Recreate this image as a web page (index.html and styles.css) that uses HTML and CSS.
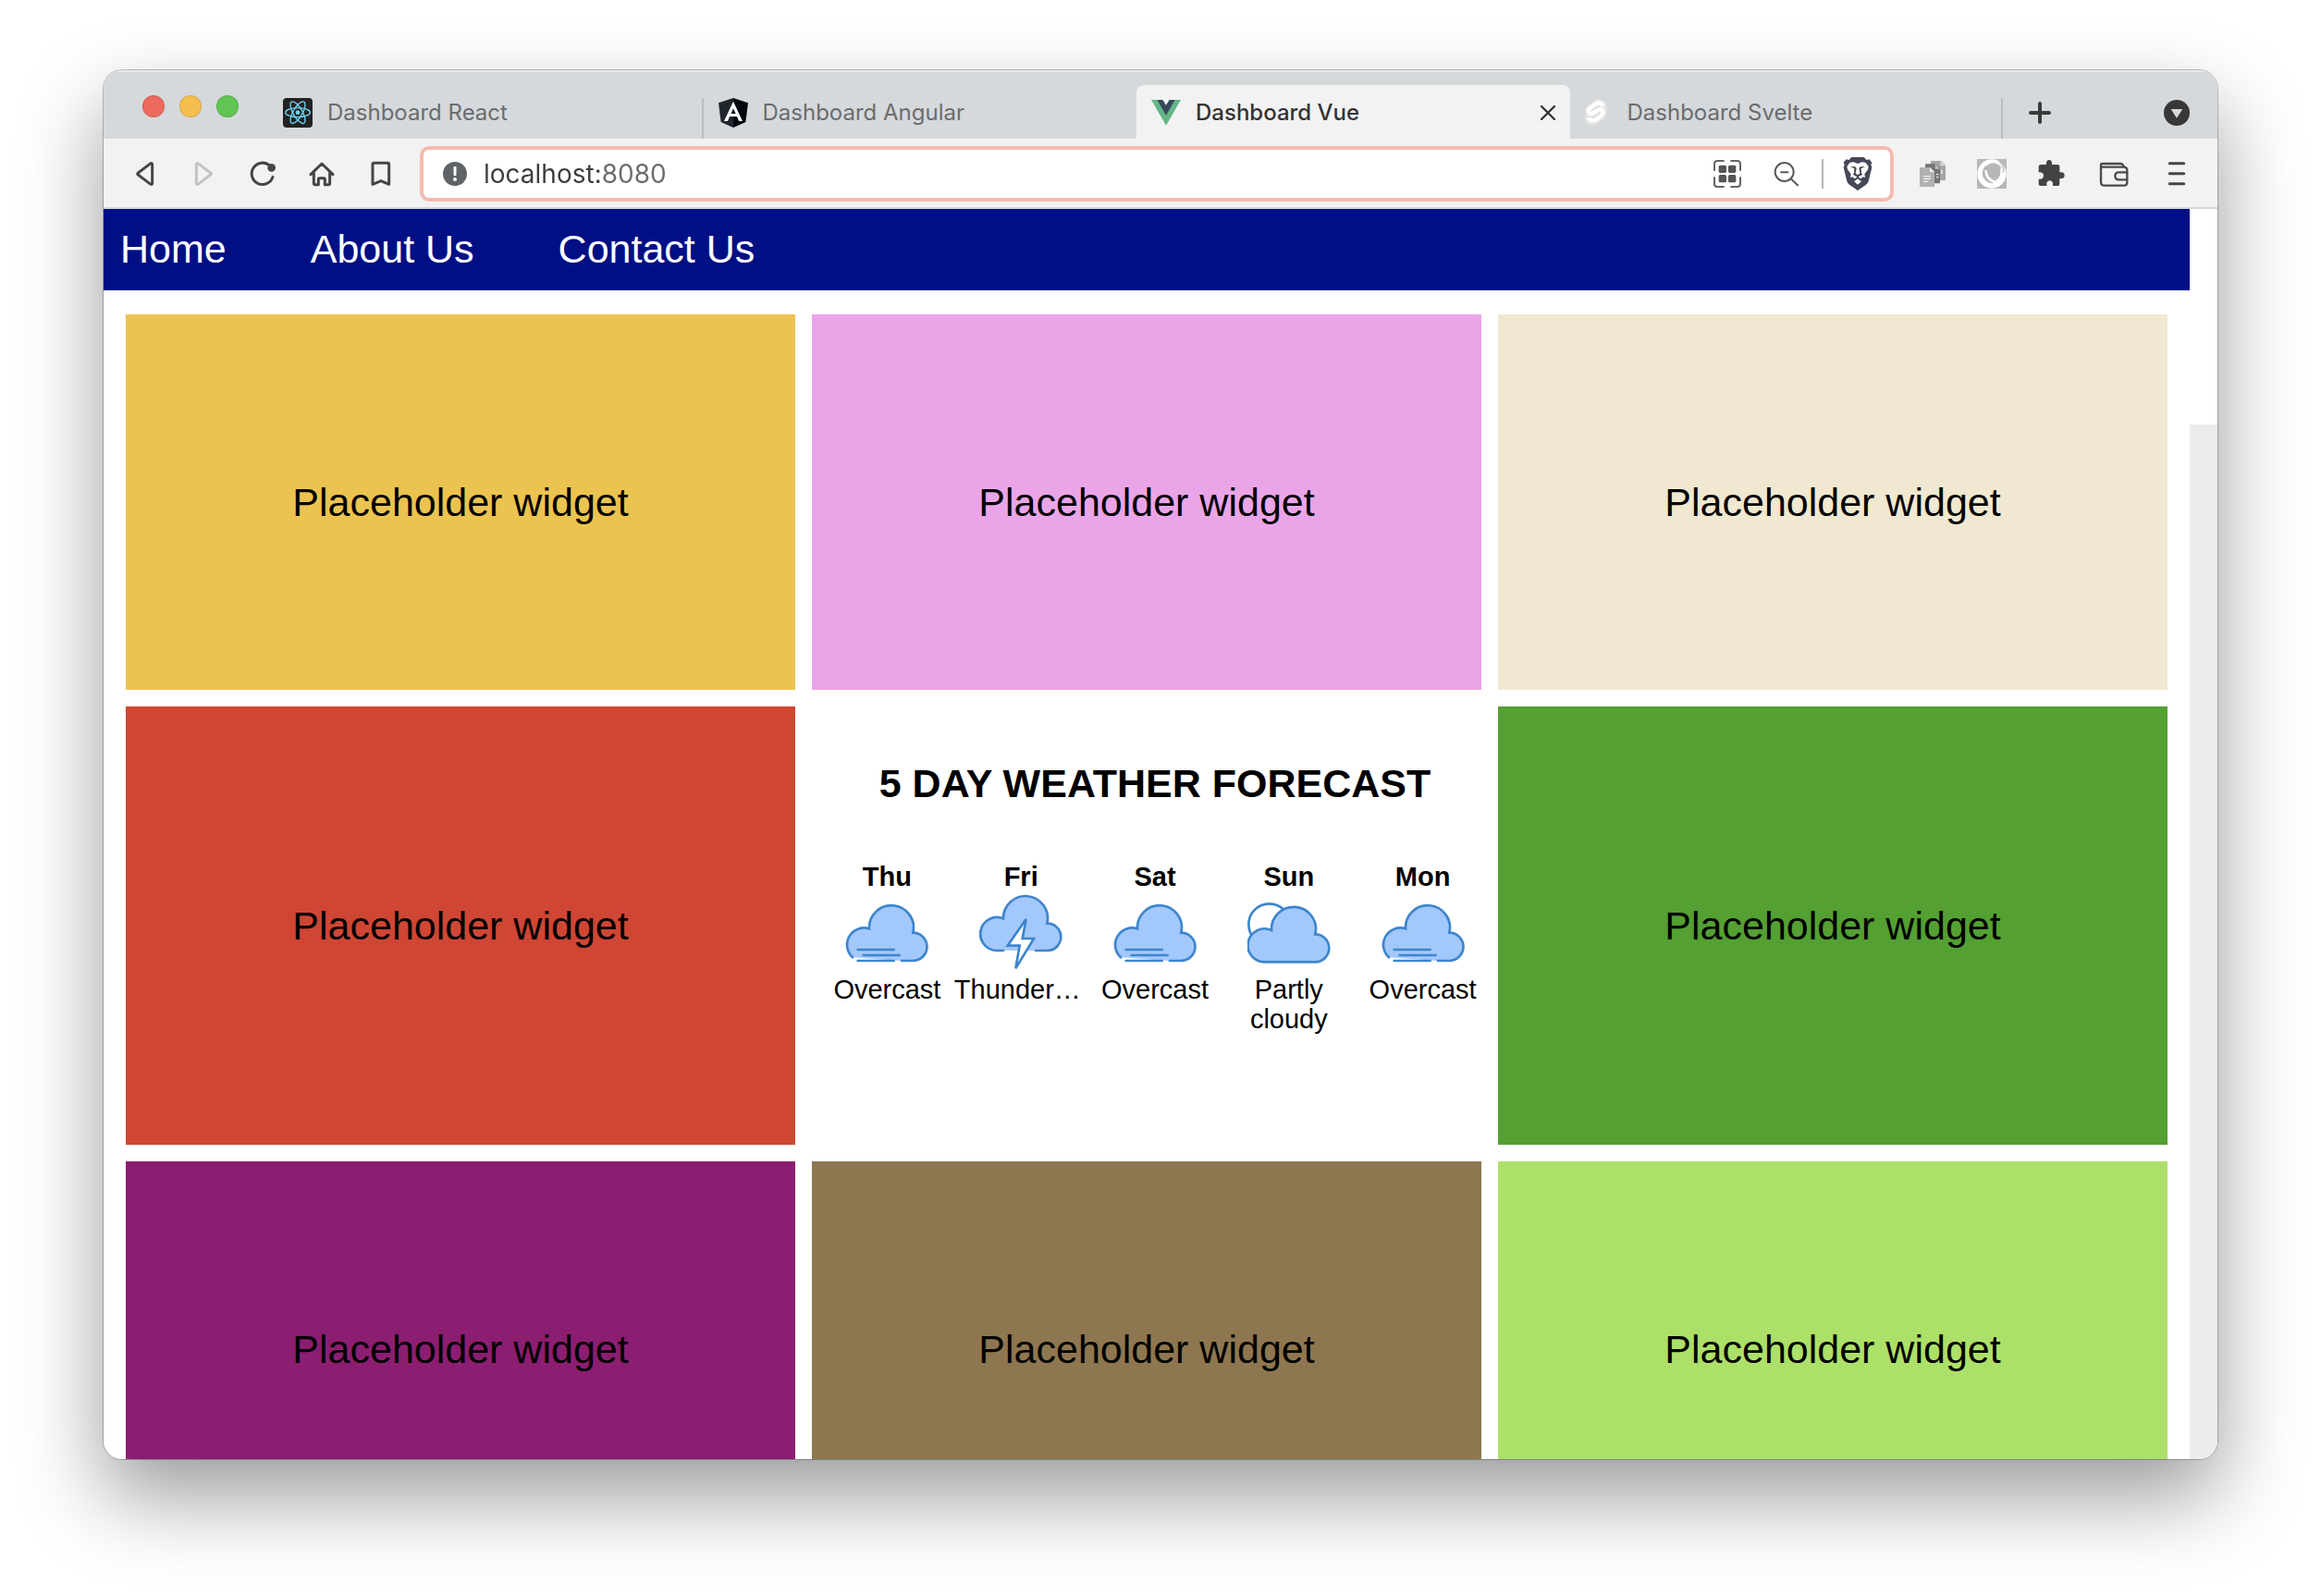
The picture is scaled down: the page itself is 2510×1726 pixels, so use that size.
FILE: index.html
```html
<!DOCTYPE html>
<html lang="en">
<head>
<meta charset="utf-8">
<title>Dashboard Vue</title>
<link rel="stylesheet" href="styles.css">
</head>
<body>
<svg class="sprite" aria-hidden="true">
  <symbol id="overcast" viewBox="0 0 270 270">
    <path class="cloud" d="M24 214A55 55 0 0 1 78 121A72 72 0 1 1 220 134A45 45 0 0 1 220 225H183"/>
    <path class="line" d="M41 189H158M59 207H176M41 225H158"/>
  </symbol>
  <symbol id="thunder" viewBox="0 0 270 270">
    <path class="cloud" d="M78 192H58A54 54 0 1 1 78 88A72 72 0 1 1 220 104A44 44 0 0 1 222 192H183"/>
    <path class="bolt" d="M152 90L92 176H131L118 250L177 153H140Z"/>
  </symbol>
  <symbol id="partly" viewBox="0 0 270 270">
    <circle class="moon" cx="71" cy="107" r="67"/>
    <path class="cloud" d="M58 229A54 54 0 1 1 78 126A72 72 0 1 1 220 139A45 45 0 0 1 220 229Z"/>
  </symbol>
</svg>
<main class="window">
  <header class="tabbar">
    <div class="lights"><span class="light red"></span><span class="light yellow"></span><span class="light green"></span></div>
    <div class="tabs">
      <a class="tab" href="#react">
        <svg class="favicon" viewBox="0 0 96 96"><rect width="96" height="96" rx="12" fill="#222"/><g fill="none" stroke="#70d5f5" stroke-width="4"><ellipse cx="48" cy="47" rx="40" ry="15"/><ellipse cx="48" cy="47" rx="40" ry="15" transform="rotate(60 48 47)"/><ellipse cx="48" cy="47" rx="40" ry="15" transform="rotate(120 48 47)"/></g><circle cx="48" cy="47" r="7" fill="#70d5f5"/></svg>
        <span>Dashboard React</span>
      </a>
      <a class="tab divided" href="#angular">
        <svg class="favicon" viewBox="0 0 96 96"><path d="M48 0L0 16L8 78L48 96Z" fill="#20262e"/><path d="M48 0L96 16L88 78L48 96Z" fill="#02060d"/><path d="M48 11L18 75H30L36 60H60L66 75H78ZM48 34L56 51H40Z" fill="#fff" fill-rule="evenodd"/></svg>
        <span>Dashboard Angular</span>
      </a>
      <a class="tab active" href="#vue" aria-current="page">
        <svg class="favicon" viewBox="0 0 96 96"><path d="M0 6H37L48 24L59 6H96L48 89Z" fill="#64b687"/><path d="M19 6H37L48 24L59 6H77L48 56Z" fill="#35495e"/></svg>
        <span>Dashboard Vue</span>
        <button class="close" aria-label="Close tab"><svg viewBox="0 0 48 48"><path d="M3 3L45 45M45 3L3 45"/></svg></button>
      </a>
      <a class="tab last" href="#svelte">
        <svg class="favicon" viewBox="0 0 96 96"><path d="M40 8L20 22Q5 34 9 50Q3 66 12 80Q25 93 42 84L65 68Q78 56 74 42Q79 25 70 13Q57 1 40 8Z" fill="#e3e3e3" stroke="#f4f1ee" stroke-width="2" stroke-dasharray="6 4"/><path d="M66 27Q58 10 42 19L24 31Q14 39 20 48Q26 54 36 47L50 38Q60 33 64 43Q66 52 57 59L40 71Q24 79 16 64" fill="none" stroke="#fff" stroke-width="13"/></svg>
        <span>Dashboard Svelte</span>
      </a>
    </div>
    <button class="newtab" aria-label="New tab"><svg viewBox="0 0 72 72"><path d="M36 6V66M6 36H66"/></svg></button>
    <button class="tabmenu" aria-label="Search tabs"><svg viewBox="0 0 84 84"><circle cx="42" cy="42" r="42"/><path d="M23 30H61L42 59Z"/></svg></button>
  </header>

  <div class="toolbar">
    <button class="tool" aria-label="Back"><svg class="stroked" viewBox="0 0 96 96"><path d="M28 45L66 16Q74 10 74 19V77Q74 86 66 80L28 51Q24 48 28 45Z"/></svg></button>
    <button class="tool disabled" aria-label="Forward" disabled><svg class="stroked" viewBox="0 0 96 96"><path d="M71 45L33 16Q25 10 25 19V77Q25 86 33 80L71 51Q75 48 71 45Z"/></svg></button>
    <button class="tool" aria-label="Reload"><svg class="stroked" viewBox="0 0 96 96"><path d="M81 58A35 35 0 1 1 68 19"/><circle class="solid" cx="77" cy="28" r="13"/></svg></button>
    <button class="tool" aria-label="Home"><svg class="stroked" viewBox="0 0 96 96"><path d="M12 50L48 15L84 50M22 44V79Q22 83 26 83H37V65Q37 62 40 62H55Q58 62 58 65V83H70Q74 83 74 79V44"/></svg></button>
    <button class="tool" aria-label="Bookmark"><svg class="stroked" viewBox="0 0 96 96"><path d="M21 17Q21 13 25 13H70Q74 13 74 17V82L48 71L21 82Z"/></svg></button>

    <div class="address">
      <svg class="info" viewBox="0 0 78 78"><circle cx="39" cy="39" r="39" fill="#5f6368"/><path d="M39 19V41" stroke="#fff" stroke-width="9" stroke-linecap="round"/><circle cx="39" cy="57" r="6" fill="#fff"/></svg>
      <input class="url" type="text" aria-label="Address" value="localhost:8080">
      <button class="tool" aria-label="QR code"><svg viewBox="0 0 96 96"><path d="M38 6H16Q6 6 6 16V38M58 6H80Q90 6 90 16V38M6 58V80Q6 90 16 90H38M58 90H80Q90 90 90 80V58" fill="none" stroke="#646464" stroke-width="6"/><g fill="#555"><rect x="20" y="20" width="25" height="25" rx="5"/><rect x="51" y="20" width="25" height="25" rx="5"/><rect x="20" y="51" width="25" height="25" rx="5"/><rect x="51" y="51" width="25" height="25" rx="5"/></g></svg></button>
      <button class="tool" aria-label="Zoom"><svg viewBox="0 0 96 96" fill="none" stroke="#5a5a5a" stroke-width="6"><circle cx="41" cy="42" r="30"/><path d="M28 43H55M62 64L86 87"/></svg></button>
      <span class="rule"></span>
      <button class="shield" aria-label="Brave Shields"><svg viewBox="0 0 96 108"><path d="M28 0H68L77 9L85 7L94 17L91 25L94 33L83 78Q81 84 75 89L48 108L21 89Q15 84 13 78L2 33L5 25L2 17L11 7L19 9Z" fill="#464858"/><path d="M13 30L23 17L35 16L48 21L61 16L73 17L83 30L81 40L70 55L72 66L65 64L58 70L48 63L38 70L31 64L24 66L26 55L15 40Z" fill="#fff"/><path d="M24 30L40 31L44 36L41 52L48 58L55 52L52 36L56 31L72 30L59 37L60 50L63 57L51 63V67L64 78L58 85L48 92L38 85L32 78L45 67V63L33 57L36 50L37 37Z" fill="#464858"/><path d="M48 70L60 79L48 89L36 79Z" fill="#fff"/></svg></button>
    </div>

    <button class="tool" aria-label="Documents"><svg viewBox="0 0 96 96"><path d="M42 6H76L90 20V69H42Z" fill="#a5a5a5"/><path d="M74 6V22H90Z" fill="#ddd"/><path d="M24 16H58L72 30V79H24Z" fill="#757575"/><path d="M56 16V32H72Z" fill="#bbb"/><path d="M6 27H39L54 42V90H6Z" fill="#b1b1b1"/><path d="M39 27V42H54Z" fill="#ededed"/><path d="M18 56H42M18 64H42M18 73H34M60 50H67M60 59H67M78 35V49" stroke="#f2f2f2" stroke-width="4"/></svg></button>
    <button class="tool" aria-label="Sync"><svg viewBox="0 0 96 96"><rect width="96" height="96" fill="#b7b7b7"/><circle cx="48" cy="48" r="47" fill="#fff"/><circle cx="53" cy="43" r="30" fill="#b7b7b7"/><path d="M27 22Q8 46 25 67Q38 82 56 78Q33 72 27 50Q25 36 34 24Z" fill="#b7b7b7"/><path d="M29 36Q28 66 60 74" fill="none" stroke="#fff" stroke-width="7"/><path d="M72 9Q90 22 86 42" fill="none" stroke="#b7b7b7" stroke-width="4"/><path d="M78 30Q84 60 62 70" fill="none" stroke="#fff" stroke-width="6"/></svg></button>
    <button class="tool" aria-label="Extensions"><svg viewBox="0 0 96 96"><path d="M15 18H33V12Q34 3 42 3T51 12V18H70Q76 18 76 24V43H82Q92 44 92 53T82 63H76V81Q76 87 70 87H54V79Q52 70 44 70T34 79V87H15Q8 87 8 81V65H14Q24 63 24 54T14 43H8V24Q9 18 15 18Z" fill="#434343"/></svg></button>
    <button class="tool wide" aria-label="Wallet"><svg viewBox="0 0 96 96" fill="none" stroke="#4a4a4a" stroke-width="7" stroke-linejoin="round"><path d="M6 26V18Q6 15 12 15H70Q76 15 80 24"/><path d="M6 26H80Q91 26 91 37V74Q91 86 80 86H18Q6 86 6 74Z"/><path d="M91 43H63Q52 44 52 55T63 67H91"/></svg></button>
    <button class="tool" aria-label="Menu"><svg class="stroked" viewBox="0 0 96 96"><path d="M25 14H71M25 47H71M25 80H71"/></svg></button>
  </div>

  <div class="viewport">
    <div class="page">
      <nav class="nav"><a href="#home">Home</a><a href="#about">About Us</a><a href="#contact">Contact Us</a></nav>
      <div class="grid">
        <section class="widget gold">Placeholder widget</section>
        <section class="widget pink">Placeholder widget</section>
        <section class="widget cream">Placeholder widget</section>
        <section class="widget red-orange">Placeholder widget</section>
        <section class="weather">
          <h2>5 DAY WEATHER FORECAST</h2>
          <div class="days">
            <div class="day"><b>Thu</b><svg><use href="#overcast"/></svg><p>Overcast</p></div>
            <div class="day"><b>Fri</b><svg><use href="#thunder"/></svg><p class="shortened">Thunder…</p></div>
            <div class="day"><b>Sat</b><svg><use href="#overcast"/></svg><p>Overcast</p></div>
            <div class="day"><b>Sun</b><svg><use href="#partly"/></svg><p>Partly cloudy</p></div>
            <div class="day"><b>Mon</b><svg><use href="#overcast"/></svg><p>Overcast</p></div>
          </div>
        </section>
        <section class="widget leaf">Placeholder widget</section>
        <section class="widget plum">Placeholder widget</section>
        <section class="widget brown">Placeholder widget</section>
        <section class="widget lime">Placeholder widget</section>
      </div>
    </div>
    <div class="scrollbar"><div class="thumb"></div></div>
  </div>
</main>
</body>
</html>
```
FILE: styles.css
```css
* { box-sizing: border-box; }

body {
  margin: 0;
  height: 100vh;
  padding: 76px 112px 148px;
  display: flex;
  overflow: hidden;
  background: #fff;
  font-family: Inter, "Liberation Sans", sans-serif;
}

button { border: 0; padding: 0; background: none; flex: none; display: flex; align-items: center; justify-content: center; }
a { color: inherit; text-decoration: none; }
svg { display: block; flex: none; }
.sprite { position: absolute; width: 0; height: 0; }

.window {
  flex: 1;
  min-width: 0;
  display: flex;
  flex-direction: column;
  border-radius: 20px;
  overflow: hidden;
  box-shadow: 0 0 0 1px rgba(0, 0, 0, .24), 0 40px 90px rgba(0, 0, 0, .4);
}

/* Tab strip */
.tabbar {
  flex: none;
  height: 74px;
  display: flex;
  align-items: flex-end;
  background: #d5d9dc;
  box-shadow: inset 0 2px 0 #e6e8ea;
}
.lights { flex: none; width: 178px; height: 74px; display: flex; gap: 16px; padding: 27px 0 0 42px; }
.light { width: 24px; height: 24px; border-radius: 50%; border: 1px solid rgba(0, 0, 0, .12); }
.red { background: #ee6a5f; }
.yellow { background: #f5bf4f; }
.green { background: #61c554; }
.tabs { flex: 1; display: flex; align-items: flex-end; min-width: 0; }
.tab {
  flex: 1;
  min-width: 0;
  height: 44px;
  display: flex;
  align-items: flex-start;
  gap: 16px;
  padding: 0 16px;
  font-size: 24px;
  line-height: 32px;
  white-space: nowrap;
  color: #6b6c6e;
}
.divided { border-left: 2px solid #bcbdbd; }
.last { border-right: 2px solid #bcbdbd; padding-left: 14px; }
.active { height: 58px; padding-top: 14px; background: #f2f2f2; border-radius: 8px 8px 0 0; color: #333; font-weight: 500; }
.favicon { width: 32px; height: 32px; }
.close { margin-left: auto; width: 16px; height: 32px; }
.close svg { width: 16px; height: 16px; stroke: #333; stroke-width: 7; stroke-linecap: round; }
.newtab, .tabmenu { height: 56px; }
.newtab { width: 80px; }
.newtab svg { width: 24px; height: 24px; stroke: #3a3a3a; stroke-width: 12; stroke-linecap: round; }
.tabmenu { width: 28px; margin: 0 30px 0 94px; }
.tabmenu svg { width: 28px; height: 28px; fill: #383838; }
.tabmenu path { fill: #d5d9dc; }

/* Toolbar */
.toolbar {
  flex: none;
  height: 76px;
  display: flex;
  align-items: center;
  padding: 2px 12px 0;
  background: #f2f2f2;
  border-bottom: 2px solid #d2d6da;
}
.tool { width: 64px; height: 52px; }
.tool.wide { width: 72px; }
.tool svg { width: 32px; height: 32px; }
.stroked { fill: none; stroke: #454545; stroke-width: 9; stroke-linecap: round; stroke-linejoin: round; }
.solid { fill: #454545; stroke: none; }
.disabled .stroked { stroke: #c2c2c2; }
.address {
  flex: 1;
  min-width: 0;
  height: 60px;
  margin: 0 10px;
  padding: 0 19px 0 21px;
  display: flex;
  align-items: center;
  background: #fff;
  border: 4px solid #f5bbae;
  border-radius: 10px;
}
.info { width: 26px; height: 26px; }
.url {
  flex: 1;
  min-width: 0;
  height: 52px;
  border: 0;
  outline: 0;
  padding: 0 0 0 18px;
  font: 28px Inter, sans-serif;
  background: linear-gradient(90deg, #3c3c3c 143px, #6b6b6b 143px);
  -webkit-background-clip: text;
  background-clip: text;
  color: transparent;
}
.rule { flex: none; width: 2px; height: 32px; margin: 0 21px 0 6px; background: #b4b4b4; }
.shield svg { width: 32px; height: 36px; }

/* Page area */
.viewport { flex: 1; min-height: 0; display: flex; overflow: hidden; background: #fff; }
.page { flex: 1; min-width: 0; font-family: "Liberation Sans", Arial, sans-serif; font-size: 43px; color: #000; }
.scrollbar { flex: none; width: 30px; background: #ececec; }
.thumb { height: 233px; background: #fff; }
.nav {
  height: 88px;
  display: flex;
  align-items: center;
  gap: 91px;
  padding: 0 18px 2px;
  background: #000f84;
  color: #fff;
}
.grid {
  display: grid;
  grid-template-columns: repeat(3, 1fr);
  grid-template-rows: 406px 474px 406px;
  gap: 18px;
  padding: 26px 24px;
}
.widget { display: flex; align-items: center; justify-content: center; }
.gold { background: #ebc350; }
.pink { background: #eaa5e9; }
.cream { background: #f0e8d0; }
.red-orange { background: #cf4634; }
.leaf { background: #54a032; }
.plum { background: #8b1e70; }
.brown { background: #8e7750; }
.lime { background: #ade068; }

/* Weather widget */
.weather { min-width: 0; margin: 0 -9px 0 9px; padding-top: 58px; text-align: center; }
.weather h2 { margin: 0 0 60px; font-size: 43px; line-height: 50px; }
.days { display: grid; grid-template-columns: repeat(5, minmax(0, 1fr)); font-size: 29px; line-height: 32px; }
.day b { display: block; }
.day svg { width: 90px; height: 90px; margin: 0 auto; }
.day p { margin: 0; }
.day .shortened { text-align: left; }
.cloud { fill: #a3c8fb; stroke: #3d85cd; stroke-width: 8; stroke-linecap: round; }
.line { fill: none; stroke: #3d85cd; stroke-width: 8; stroke-linecap: round; }
.bolt { fill: #fff; stroke: #3d85cd; stroke-width: 8; }
.moon { fill: #fff; stroke: #3d85cd; stroke-width: 8; }
```
